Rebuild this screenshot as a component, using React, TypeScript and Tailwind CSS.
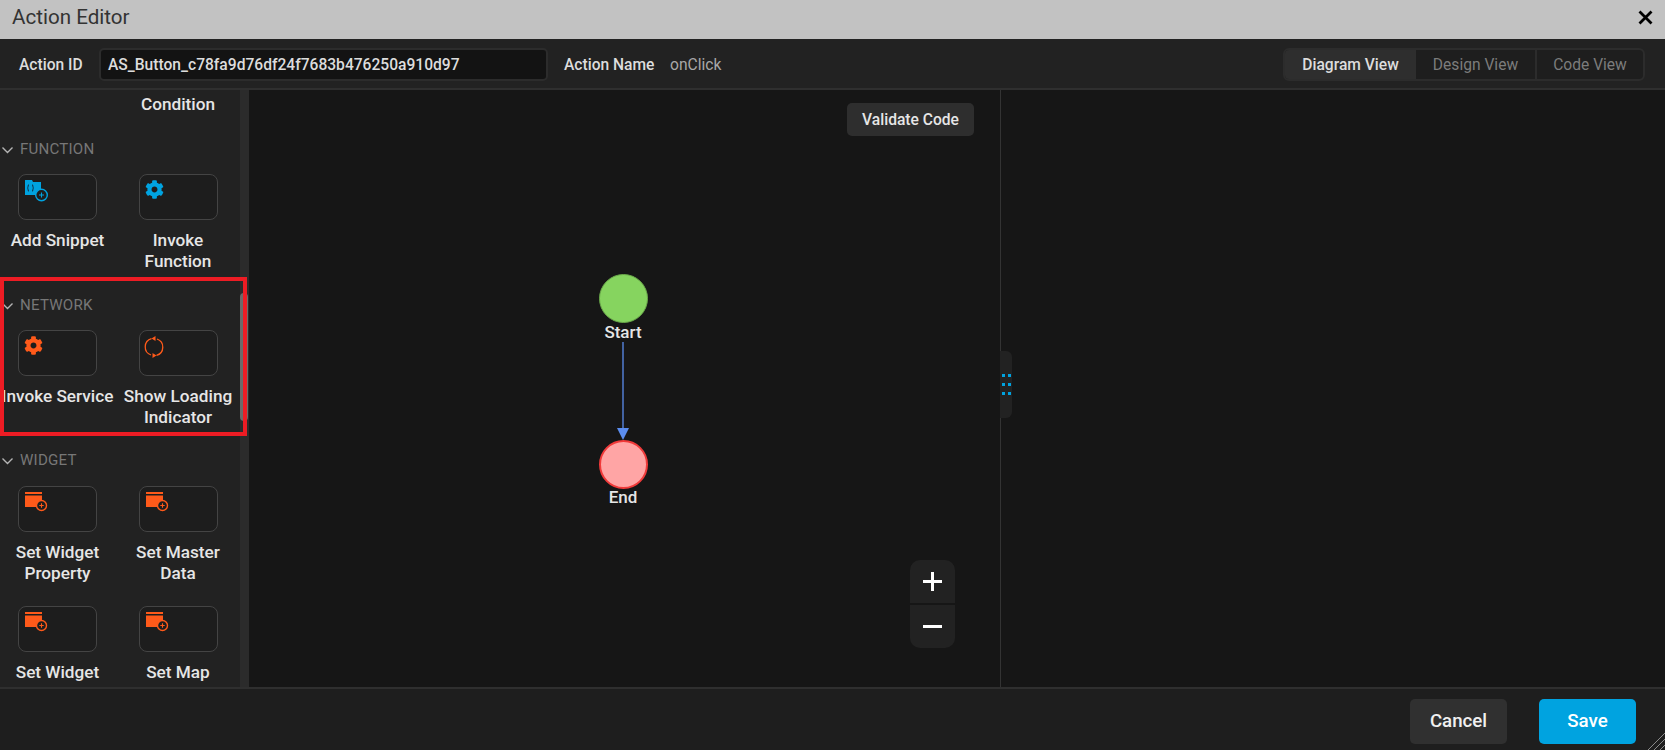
import { FaCog } from 'react-icons/fa';

const orange = '#ff5a1a';
const blue = '#00a3e0';

function SnippetIcon() {
  return (
    <svg width="23" height="22" viewBox="0 0 23 22" className="block">
      <path d="M0 0h7l1 2h8v13H0z" fill={blue} />
      <circle cx="16.5" cy="15" r="5.8" fill="#1e1e1e" stroke={blue} strokeWidth="1.4" />
      <path d="M14 15h5M16.500 12.500v5" stroke={blue} strokeWidth="1.1" />
      <path d="M4 4.5c-1.2 0-.6 3-1.5 3.500.9.5.3 3.500 1.500 3.500M7 4.500c1.200 0 .6 3 1.500 3.500-.9.5-.3 3.500-1.500 3.500" fill="none" stroke="#123" strokeWidth="0.9" />
    </svg>
  );
}

function WidgetIcon() {
  return (
    <svg width="23" height="20" viewBox="0 0 23 20" className="block">
      <path d="M0 0h17v2H0zM0 3.500h17V15H0z" fill={orange} />
      <circle cx="16.500" cy="13.500" r="5" fill="#1e1e1e" stroke={orange} strokeWidth="1.400" />
      <path d="M14.300 13.500h4.400M16.500 11.300v4.400" stroke={orange} strokeWidth="1.100" />
    </svg>
  );
}

function LoadingIcon() {
  return (
    <svg width="20" height="22" viewBox="0 0 20 22" fill="none" className="-ml-[2px] block">
      <path d="M7.500 2.600A8.600 8.600 0 0 0 7 19" stroke={orange} strokeWidth="1.300" />
      <path d="M12.500 19.400A8.600 8.600 0 0 0 13 3" stroke={orange} strokeWidth="1.300" />
      <path d="M11.500 0v5L7.500 2.500z" fill={orange} />
      <path d="M8.500 17v5l4-2.500z" fill={orange} />
    </svg>
  );
}

function GearIcon({ color }: { color: string }) {
  return <FaCog size={19} color={color} className="-ml-[1px]" />;
}

function Tile({ icon, lines }: { icon: React.ReactNode; lines: string[] }) {
  return (
    <div className="flex flex-col items-center">
      <div className="h-[46px] w-[79px] rounded-[8px] border border-[#444444] bg-[#1d1d1d] pl-[6px] pt-[5px]">
        {icon}
      </div>
      <div className="mt-[10px] whitespace-nowrap text-center text-[17.2px] font-medium leading-[21px] text-[#e6e6e6]">
        {lines.map((line) => (
          <div key={line}>{line}</div>
        ))}
      </div>
    </div>
  );
}

function SectionHeader({ name }: { name: string }) {
  return (
    <div className="mb-[15px] flex h-[19px] items-center gap-[6px] pl-[1px]">
      <svg width="13" height="8" viewBox="0 0 13 8" fill="none">
        <path d="M1.500 1.500l5 5 5-5" stroke="#b5b5b5" strokeWidth="1.400" />
      </svg>
      <span className="text-[15.1px] leading-[19px] tracking-[0.2px] text-[#777777]">{name}</span>
    </div>
  );
}

const gridClass = 'grid grid-cols-[115px_126px] gap-y-[22px]';

function Sidebar() {
  return (
    <aside className="relative flex w-[250px] shrink-0 overflow-hidden bg-[#222222]">
      <div className="w-[240px] shrink-0 pt-[4px]">
        <div className={gridClass}>
          <div />
          <div className="text-center text-[17.2px] font-medium leading-[21px] text-[#e6e6e6]">Condition</div>
        </div>
        <div className="mt-[25px]">
          <SectionHeader name="FUNCTION" />
          <div className={gridClass}>
            <Tile icon={<SnippetIcon />} lines={['Add Snippet']} />
            <Tile icon={<GearIcon color={blue} />} lines={['Invoke', 'Function']} />
          </div>
        </div>
        <div className="mt-[24px]">
          <SectionHeader name="NETWORK" />
          <div className={gridClass}>
            <Tile icon={<GearIcon color={orange} />} lines={['Invoke Service', '\u00a0']} />
            <Tile icon={<LoadingIcon />} lines={['Show Loading', 'Indicator']} />
          </div>
        </div>
        <div className="mt-[23px]">
          <div className="mb-[16px]">
            <SectionHeader name="WIDGET" />
          </div>
          <div className={gridClass}>
            <Tile icon={<WidgetIcon />} lines={['Set Widget', 'Property']} />
            <Tile icon={<WidgetIcon />} lines={['Set Master', 'Data']} />
            <Tile icon={<WidgetIcon />} lines={['Set Widget']} />
            <Tile icon={<WidgetIcon />} lines={['Set Map']} />
          </div>
        </div>
      </div>
      {/* scrollbar */}
      <div className="w-[9px] shrink-0 bg-[#2b2b2b] pt-[203px]">
        <div className="h-[128px] w-[8px] rounded-[4px] bg-[#6a6a6a]" />
      </div>
      <div className="flex-1 bg-[#161616]" />
      {/* highlight box */}
      <div className="absolute left-0 top-[187px] h-[159px] w-[247px] border-[4px] border-[#ed1c24]" />
    </aside>
  );
}

function Canvas() {
  return (
    <div className="relative w-[751px] shrink-0 border-r border-[#333333] bg-[#161616]">
      <button className="absolute left-[597px] top-[13px] h-[33px] w-[127px] rounded-[5px] bg-[#2e2e2e] pt-[3px] text-[15.6px] font-medium text-[#e6e6e6]">
        Validate Code
      </button>

      {/* diagram nodes */}
      <div className="absolute left-[349px] top-[184px] flex w-[48px] flex-col items-center">
        <div className="h-[49px] w-[49px] shrink-0 rounded-full border border-[#6aa84a] bg-[#86d45f]" />
        <span className="-mt-[1px] whitespace-nowrap text-[17px] font-medium leading-[20px] text-[#e6e6e6]">Start</span>
      </div>
      <svg className="absolute left-[367px] top-[252px]" width="12" height="98" viewBox="0 0 12 98">
        <path d="M6 0v86" stroke="#5b8def" strokeWidth="1.300" />
        <path d="M0 86h12L6 98z" fill="#5b8def" />
      </svg>
      <div className="absolute left-[349px] top-[350px] flex w-[48px] flex-col items-center">
        <div className="h-[49px] w-[49px] shrink-0 rounded-full border-2 border-[#f03a3a] bg-[#ffa5a5]" />
        <span className="-mt-[2px] whitespace-nowrap text-[17px] font-medium leading-[20px] text-[#e6e6e6]">End</span>
      </div>

      {/* zoom controls */}
      <div className="absolute left-[660px] top-[470px] flex w-[45px] flex-col gap-[2px] overflow-hidden rounded-[10px]">
        <div className="flex h-[43px] items-center justify-center bg-[#222222]">
          <svg width="19" height="19" viewBox="0 0 19 19">
            <path d="M0 9.500h19M9.500 0v19" stroke="#ffffff" strokeWidth="3" />
          </svg>
        </div>
        <div className="flex h-[43px] items-center justify-center bg-[#222222]">
          <svg width="19" height="3" viewBox="0 0 19 3">
            <path d="M0 1.500h19" stroke="#ffffff" strokeWidth="3" />
          </svg>
        </div>
      </div>

      {/* panel handle */}
      <div className="absolute left-[750px] top-[261px] z-10 grid h-[67px] w-[12px] grid-cols-[3px_3px] content-center justify-center gap-x-[3px] gap-y-[6px] rounded-r-[6px] bg-[#222222]">
        {[0, 1, 2, 3, 4, 5].map((i) => (
          <div key={i} className="h-[3px] w-[3px] bg-[#00a3e0]" />
        ))}
      </div>
    </div>
  );
}

export default function App() {
  return (
    <div className="relative flex h-[750px] w-full flex-col overflow-hidden bg-[#1e1e1e] font-['Roboto',sans-serif]">
      <header className="flex h-[39px] shrink-0 items-center justify-between bg-[#c2c2c2] pb-[5px] pl-[12px] pr-[12px]">
        <span className="text-[20.6px] leading-none text-[#333333]">Action Editor</span>
        <svg width="15" height="15" viewBox="0 0 15 15">
          <path d="M1.500 1.500l12 12M13.500 1.500l-12 12" stroke="#000000" strokeWidth="2.800" />
        </svg>
      </header>

      <div className="flex h-[51px] shrink-0 items-center border-b-2 border-[#2f2f2f] bg-[#222222] pl-[19px] pr-[20px] pt-[2px] text-[15.6px]">
        <span className="w-[80px] pt-[3px] font-medium text-[#dddddd]">Action ID</span>
        <div className="flex h-[33px] w-[449px] items-center rounded-[5px] border-2 border-[#2c2c2c] bg-[#131313] pl-[7px] pt-[3px] font-medium text-[#dddddd]">
          AS_Button_c78fa9d76df24f7683b476250a910d97
        </div>
        <span className="ml-[16px] w-[106px] pt-[3px] font-medium text-[#dddddd]">Action Name</span>
        <span className="pt-[3px] text-[#a8a8a8]">onClick</span>
        <div className="ml-auto flex h-[33px] overflow-hidden rounded-[6px] border-2 border-[#2c2c2c] bg-[#1e1e1e]">
          <div className="flex w-[131px] items-center justify-center bg-[#2e2e2e] pt-[3px] font-medium text-[#dddddd]">Diagram View</div>
          <div className="flex w-[121px] items-center justify-center border-r-2 border-[#2c2c2c] pt-[3px] text-[#7c7c7c]">Design View</div>
          <div className="flex w-[106px] items-center justify-center pt-[3px] text-[#7c7c7c]">Code View</div>
        </div>
      </div>

      <main className="flex min-h-0 flex-1">
        <Sidebar />
        <Canvas />
        <div className="flex-1 bg-[#161616]" />
      </main>

      <footer className="flex h-[63px] shrink-0 items-start justify-end gap-[32px] border-t-2 border-[#2f2f2f] bg-[#1e1e1e] pr-[29px] pt-[10px]">
        <button className="h-[45px] w-[97px] rounded-[5px] bg-[#303030] text-[18.7px] font-medium text-[#f0f0f0]">Cancel</button>
        <button className="h-[45px] w-[97px] rounded-[5px] bg-[#00a3e0] text-[18.7px] font-medium text-white">Save</button>
      </footer>

      {/* resize grip */}
      <svg className="absolute bottom-0 right-0" width="17" height="17" viewBox="0 0 17 17">
        <path d="M0 17L17 0M6 17L17 6M12 17l5-5" stroke="#8a8a8a" strokeWidth="1" />
      </svg>
    </div>
  );
}
